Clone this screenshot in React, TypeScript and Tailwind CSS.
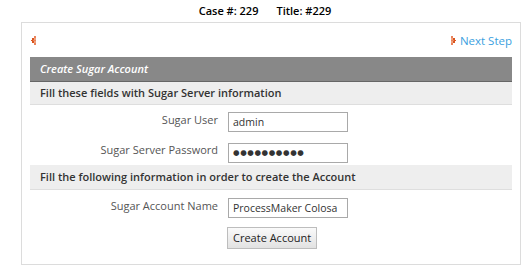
import React from 'react';

function LeftArrow() {
  return (
    <svg width="6" height="9" viewBox="0 0 6 9" className="block">
      <rect x="3" y="0" width="2" height="2" fill="#e9835c" />
      <rect x="1" y="2" width="2" height="2" fill="#d9541e" />
      <rect x="3" y="2" width="2" height="2" fill="#f0a27f" />
      <rect x="0" y="4" width="2" height="1" fill="#d9541e" />
      <rect x="2" y="4" width="3" height="1" fill="#e9835c" />
      <rect x="1" y="5" width="2" height="2" fill="#d9541e" />
      <rect x="3" y="5" width="2" height="2" fill="#f0a27f" />
      <rect x="3" y="7" width="2" height="2" fill="#e9835c" />
    </svg>
  );
}

function RightArrow() {
  return (
    <svg width="6" height="9" viewBox="0 0 6 9" className="block">
      <rect x="1" y="0" width="2" height="2" fill="#e9835c" />
      <rect x="1" y="2" width="2" height="2" fill="#f0a27f" />
      <rect x="3" y="2" width="2" height="2" fill="#d9541e" />
      <rect x="1" y="4" width="3" height="1" fill="#e9835c" />
      <rect x="4" y="4" width="2" height="1" fill="#d9541e" />
      <rect x="1" y="5" width="2" height="2" fill="#f0a27f" />
      <rect x="3" y="5" width="2" height="2" fill="#d9541e" />
      <rect x="1" y="7" width="2" height="2" fill="#e9835c" />
    </svg>
  );
}

function Field({ label, children }: { label: string; children: React.ReactNode }) {
  return (
    <div className="flex items-center h-[30px]">
      <div className="w-[193px] pr-[5px] text-right text-[11px] text-[#555]">{label}</div>
      <div className="pl-[5px]">{children}</div>
    </div>
  );
}

export default function App() {
  const inputCls =
    'w-[120px] h-[20px] border border-[#a9a9a9] px-[4px] text-[10.5px] text-[#333] bg-white outline-none';

  return (
    <div className="w-[530px] h-[271px] bg-white font-['Open_Sans',sans-serif] text-[#333]">
      <div className="h-[22px] flex items-center justify-center gap-[18px] text-[11px] font-semibold text-black">
        <span>Case #: 229</span>
        <span>Title: #229</span>
      </div>

      <div className="ml-[21px] w-[500px] h-[243px] border border-[#dcdcdc] px-[8px]">
        <div className="h-[34px] flex items-center justify-between">
          <div className="pl-[1px] pt-[1px]">
            <LeftArrow />
          </div>
          <div className="flex items-center gap-[4px] pt-[1px]">
            <RightArrow />
            <span className="text-[11.5px] text-[#3b9fe0]">Next Step</span>
          </div>
        </div>

        <div className="h-[25px] bg-[#888] border-b border-[#666] flex items-center px-[10px]">
          <span className="text-[11px] italic font-semibold text-white">Create Sugar Account</span>
        </div>
        <div className="h-[23px] bg-[#eeeeee] border-b border-[#dedede] flex items-center px-[10px]">
          <span className="text-[11px] font-semibold text-[#333]">Fill these fields with Sugar Server information</span>
        </div>

        <Field label="Sugar User">
          <input className={inputCls} defaultValue="admin" />
        </Field>
        <Field label="Sugar Server Password">
          <input
            className="w-[120px] h-[20px] border border-[#a9a9a9] px-[4px] text-[7.5px] tracking-[0.6px] text-[#333] bg-white outline-none font-['DejaVu_Sans',sans-serif]"
            defaultValue="●●●●●●●●●●"
          />
        </Field>

        <div className="h-[25px] bg-[#eeeeee] border-b border-[#dedede] flex items-center px-[10px]">
          <span className="text-[11px] font-semibold text-[#333]">
            Fill the following information in order to create the Account
          </span>
        </div>

        <div className="pt-[1px]">
          <Field label="Sugar Account Name">
            <input className={inputCls} defaultValue="ProcessMaker Colosa" />
          </Field>
        </div>

        <div className="flex pl-[197px] pt-[6px]">
          <button className="h-[22px] px-[5px] border border-[#bdbdbd] bg-gradient-to-b from-[#fafafa] to-[#e2e2e2] text-[11px] text-[#222]">
            Create Account
          </button>
        </div>
      </div>
    </div>
  );
}
